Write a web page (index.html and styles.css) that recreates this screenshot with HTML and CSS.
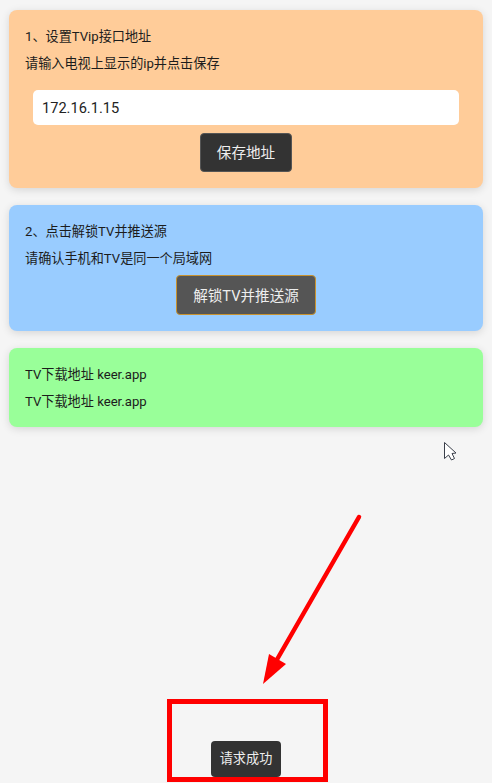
FILE: index.html
```html
<!DOCTYPE html>
<html lang="zh-CN">
<head>
    <meta charset="UTF-8">
    <meta name="viewport" content="width=device-width, initial-scale=1.0">
    <title>TV推送</title>
    <link rel="stylesheet" href="styles.css">
</head>
<body>

<div class="container">
    <div class="card card-orange">
        <p>1、设置TVip接口地址</p>
        <p>请输入电视上显示的ip并点击保存</p>
        <input class="ip-input" type="text" value="172.16.1.15">
        <button class="btn">保存地址</button>
    </div>

    <div class="card card-blue">
        <p>2、点击解锁TV并推送源</p>
        <p>请确认手机和TV是同一个局域网</p>
        <button class="btn btn-focus">解锁TV并推送源</button>
    </div>

    <div class="card card-green">
        <p>TV下载地址 keer.app</p>
        <p>TV下载地址 keer.app</p>
    </div>
</div>

<div class="toast">请求成功</div>

<!-- annotations drawn over the screenshot -->
<div class="highlight"></div>
<svg class="overlay" width="492" height="783" viewBox="0 0 492 783">
    <line x1="359" y1="517" x2="275" y2="663" stroke="#ff0000" stroke-width="4.5" stroke-linecap="round"/>
    <polygon points="263,684 269,654 286,664" fill="#ff0000"/>
    <path d="M444.5 442.5 V458.5 L448.5 455 L451.5 460 L454.5 458.5 L452 453.5 L456 453 Z" fill="#ffffff" stroke="#3a3f4a" stroke-width="1" stroke-linejoin="round"/>
</svg>

</body>
</html>
```

FILE: styles.css
```css
* {
    box-sizing: border-box;
}
body {
    margin: 0;
    height: 783px;
    overflow: hidden;
    background-color: #f5f5f5;
    font-family: Roboto, "Noto Sans CJK SC", sans-serif;
    color: #1c1c1c;
}
.container {
    display: flex;
    flex-direction: column;
    gap: 17px;
    padding: 10px 9px;
}
.card {
    display: flex;
    flex-direction: column;
    align-items: flex-start;
    padding: 16px 16px 15px;
    border-radius: 8px;
    box-shadow: 0 2px 9px rgba(0, 0, 0, 0.13);
}
.card p {
    margin: 0 0 6px;
    font-size: 13.15px;
    line-height: 21px;
}
.card p:last-of-type {
    margin-bottom: 0;
}
.card-orange {
    background: #ffcc99;
    padding-bottom: 16px;
}
.card-blue {
    background: #99ccff;
    padding-bottom: 16px;
}
.card-green {
    background: #99ff99;
}
.ip-input {
    align-self: stretch;
    height: 35px;
    margin: 16px 8px 8px;
    padding: 0 9px;
    border: none;
    border-radius: 5px;
    background: #fff;
    color: #222;
    font-family: inherit;
    font-size: 14.6px;
}
.btn {
    align-self: center;
    height: 39px;
    padding: 0 16px 2px;
    border: 1px solid #555;
    border-radius: 4px;
    background-color: #333;
    color: #eee;
    font-family: inherit;
    font-size: 14.6px;
}
.btn-focus {
    height: 40px;
    margin-top: 6px;
    border-color: #c8922f;
    background-color: #555;
}
.toast {
    position: absolute;
    left: 211px;
    top: 741px;
    width: 70px;
    height: 36px;
    border-radius: 4px;
    background: #333;
    color: #eee;
    font-size: 13.15px;
    line-height: 36px;
    text-align: center;
}
.highlight {
    position: absolute;
    left: 167px;
    top: 699px;
    width: 161px;
    height: 83px;
    border: 5px solid #ff0000;
}
.overlay {
    position: absolute;
    left: 0;
    top: 0;
    pointer-events: none;
}
```
